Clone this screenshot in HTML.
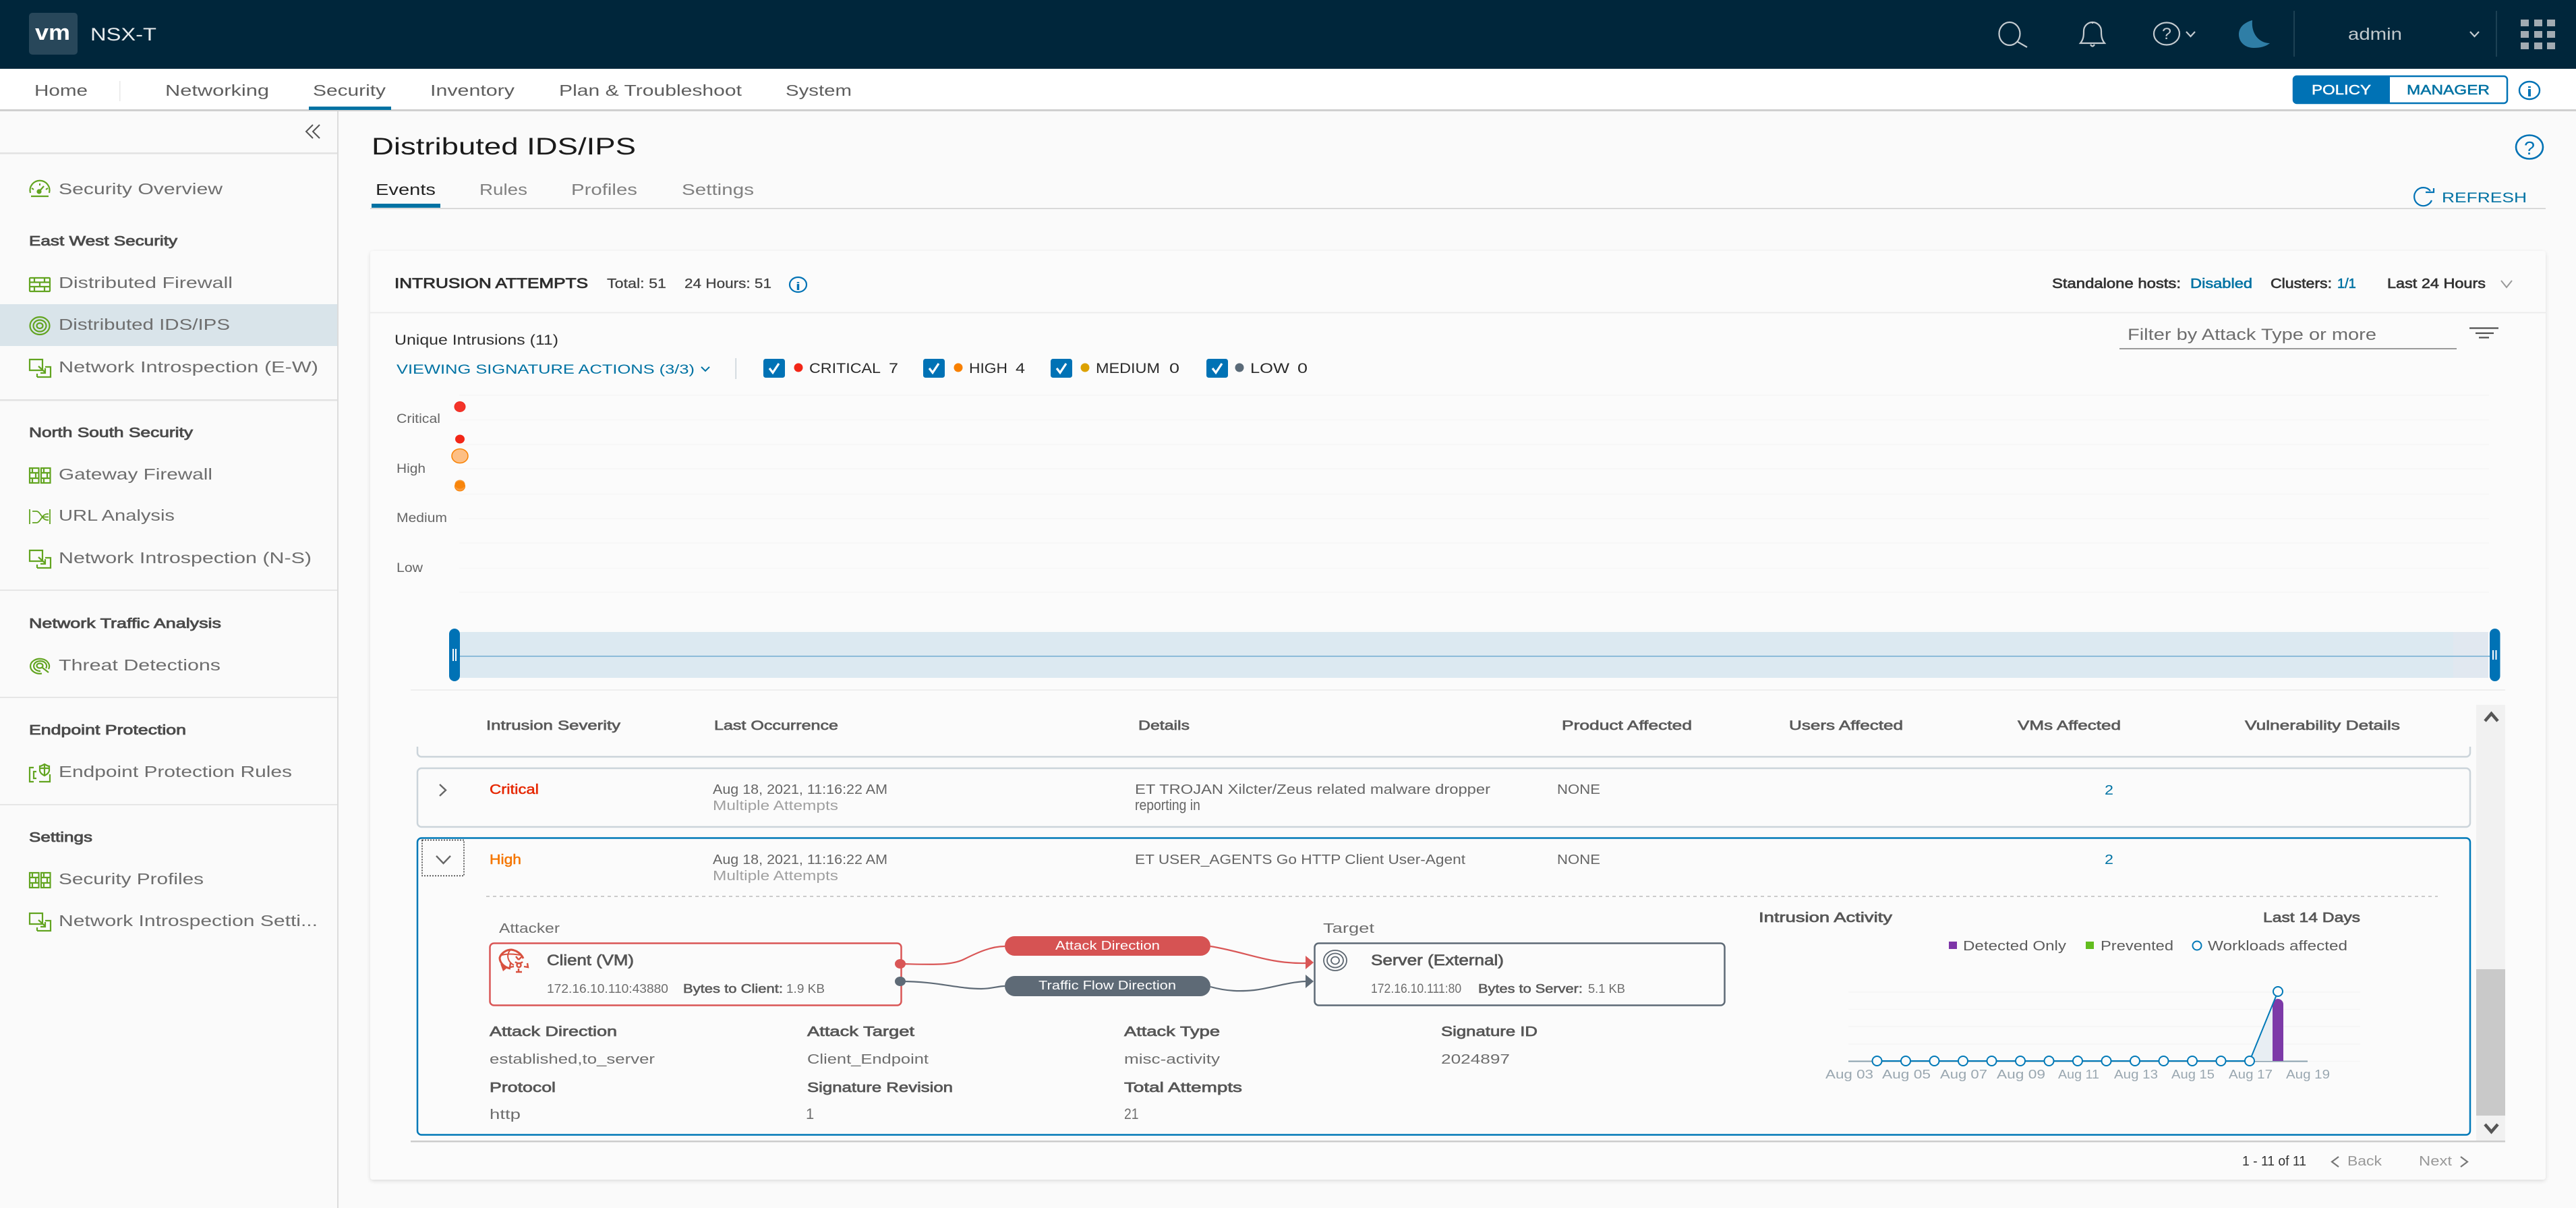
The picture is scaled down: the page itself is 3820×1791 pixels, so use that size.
<!DOCTYPE html>
<html lang="en"><head><meta charset="utf-8"><title>Distributed IDS/IPS</title>
<style>
html,body{margin:0;padding:0;background:#fafafa;width:3820px;height:1791px;overflow:hidden}
svg{display:block;font-family:"Liberation Sans",sans-serif}
.nav{font-size:23px;fill:#5e5e5e}
.side{font-size:23px;fill:#6e6e6e}
.sh{font-size:20.5px;fill:#4a4a4a;stroke:#4a4a4a;stroke-width:.8}
.tab{font-size:23px;fill:#808080}
.b{font-size:20px;fill:#333;stroke:#333;stroke-width:.65}
.bl{font-size:20px;fill:#0072a3;stroke:#0072a3;stroke-width:.6}
.m{font-size:20px;fill:#444;stroke:#444;stroke-width:.3}
.th{font-size:19px;fill:#5a5a5a;stroke:#5a5a5a;stroke-width:.65}
.td{font-size:20px;fill:#666}
.sub{font-size:20px;fill:#a0a0a0}
.dh{font-size:20px;fill:#565656;stroke:#565656;stroke-width:.7}
.dv{font-size:20px;fill:#6e6e6e}
.sm{font-size:18px;fill:#6e6e6e}
.smb{font-size:18px;fill:#5a5a5a;stroke:#5a5a5a;stroke-width:.55}
.ax{font-size:18px;fill:#9aa7b0}
.yl{font-size:19px;fill:#666}
.lg{font-size:20px;fill:#5c5c5c}
.k{font-size:21px;fill:#2a2a2a}
.ic{fill:none;stroke:#62a420;stroke-width:2.2}
</style></head><body>
<svg xmlns="http://www.w3.org/2000/svg" width="3820" height="1791" viewBox="0 0 3820 1791">
<defs>
<filter id="sd" x="-2%" y="-2%" width="104%" height="104%"><feDropShadow dx="0" dy="2" stdDeviation="3" flood-color="#000" flood-opacity=".12"/></filter>
<symbol id="fw2" overflow="visible"><g class="ic"><rect x="1" y="1" width="13.5" height="22"/><rect x="18" y="1" width="13.5" height="22"/><path d="M1 8H14.5M1 16H14.5M18 8H31.5M18 16H31.5M5 1V8M10 8V16M5 16V23M22 1V8M27 8V16M22 16V23"/></g></symbol>
<symbol id="in" overflow="visible"><g class="ic"><path d="M1 1H20V17H1Z"/><path d="M12 27H32V12H24M12 27V22"/><path d="M14 11L24 20M24 14V21H17"/></g></symbol>
<symbol id="chk" overflow="visible"><rect width="32" height="28" rx="3.5" fill="#0072b5"/><path d="M9 14L14 20.5L23 7" fill="none" stroke="#fff" stroke-width="3.2"/></symbol>
</defs>

<!-- header -->
<rect width="3820" height="102" fill="#00263b"/>
<rect x="43" y="19" width="72" height="62" rx="5" fill="#28475a"/>
<text x="52" y="59" font-size="32" font-weight="bold" fill="#fff" textLength="52" lengthAdjust="spacingAndGlyphs">vm</text>
<text x="134" y="60" font-size="27" fill="#e8ecee" textLength="98" lengthAdjust="spacingAndGlyphs">NSX-T</text>
<g fill="none" stroke="#c4cbd0" stroke-width="2.2">
<ellipse cx="2980" cy="50" rx="15.5" ry="17"/><path d="M2992 62L3006 70"/>
<path d="M3085 64C3090 58 3090 52 3090 46A13 13 0 0 1 3116 46C3116 52 3116 58 3121 64Z"/><path d="M3103 32V35"/><path d="M3100 66Q3103 71 3106 66"/>
<ellipse cx="3213" cy="50" rx="19" ry="16.5"/>
<path d="M3242 47L3248.5 54L3255 47M3663 47L3669.5 54L3676 47"/>
</g>
<text x="3206" y="58" font-size="24" fill="#c4cbd0" textLength="14" lengthAdjust="spacingAndGlyphs">?</text>
<path d="M3340 30C3326 34 3320 42 3320 51C3320 63 3330 71 3342 71C3352 71 3360 69 3366 64C3350 64 3338 50 3340 30Z" fill="#2f7ea6"/>
<path d="M3402 16V84M3702 16V84" stroke="#1d4154" stroke-width="2"/>
<text x="3482" y="59" font-size="25" fill="#c0c8cc" textLength="80" lengthAdjust="spacingAndGlyphs">admin</text>
<g fill="#a2abb2"><rect x="3738" y="29" width="12" height="10"/><rect x="3758" y="29" width="12" height="10"/><rect x="3777" y="29" width="12" height="10"/><rect x="3738" y="46" width="12" height="10"/><rect x="3758" y="46" width="12" height="10"/><rect x="3777" y="46" width="12" height="10"/><rect x="3738" y="63" width="12" height="10"/><rect x="3758" y="63" width="12" height="10"/><rect x="3777" y="63" width="12" height="10"/></g>

<!-- nav -->
<rect y="102" width="3820" height="61" fill="#fff"/>
<rect y="162" width="3820" height="3" fill="#d0d0d0"/>
<text class="nav" x="51" y="142" textLength="79" lengthAdjust="spacingAndGlyphs">Home</text>
<rect x="177" y="120" width="1.5" height="30" fill="#e8e8e8"/>
<text class="nav" x="245" y="142" textLength="154" lengthAdjust="spacingAndGlyphs">Networking</text>
<text class="nav" x="464" y="142" textLength="108" lengthAdjust="spacingAndGlyphs">Security</text>
<rect x="458" y="158" width="122" height="5" fill="#0072a3"/>
<text class="nav" x="638" y="142" textLength="125" lengthAdjust="spacingAndGlyphs">Inventory</text>
<text class="nav" x="829" y="142" textLength="271" lengthAdjust="spacingAndGlyphs">Plan &amp; Troubleshoot</text>
<text class="nav" x="1165" y="142" textLength="98" lengthAdjust="spacingAndGlyphs">System</text>
<rect x="3401" y="113" width="317" height="40" rx="5" fill="#fff" stroke="#0072b5" stroke-width="2.5"/>
<path d="M3406 112H3544V153H3406A6 6 0 0 1 3400 147V118A6 6 0 0 1 3406 112Z" fill="#0072b5"/>
<text x="3428" y="140" font-size="20" fill="#fff" stroke="#fff" stroke-width=".5" textLength="88" lengthAdjust="spacingAndGlyphs">POLICY</text>
<text x="3569" y="140" font-size="20" fill="#0072a3" stroke="#0072a3" stroke-width=".5" textLength="123" lengthAdjust="spacingAndGlyphs">MANAGER</text>
<ellipse cx="3751" cy="134" rx="15" ry="13" fill="none" stroke="#0072b5" stroke-width="2.4"/>
<text x="3747" y="143" font-size="20" font-weight="bold" fill="#0072b5" textLength="8" lengthAdjust="spacingAndGlyphs">i</text>

<!-- sidebar -->
<rect x="500" y="165" width="2" height="1626" fill="#dcdcdc"/>
<path d="M464 185L454 195L464 205M474 185L464 195L474 205" fill="none" stroke="#555" stroke-width="2"/>
<rect y="226" width="500" height="2.5" fill="#e2e2e2"/>
<rect y="592" width="500" height="2.5" fill="#e2e2e2"/>
<rect y="874" width="500" height="2" fill="#e6e6e6"/>
<rect y="1033" width="500" height="2" fill="#e6e6e6"/>
<rect y="1192" width="500" height="2" fill="#e6e6e6"/>
<rect y="451" width="500" height="62" fill="#d9e4ea"/>
<text class="side" x="87" y="288" textLength="243" lengthAdjust="spacingAndGlyphs">Security Overview</text>
<text class="sh" x="43" y="364" textLength="220" lengthAdjust="spacingAndGlyphs">East West Security</text>
<text class="side" x="87" y="427" textLength="258" lengthAdjust="spacingAndGlyphs">Distributed Firewall</text>
<text class="side" x="87" y="489" textLength="254" lengthAdjust="spacingAndGlyphs">Distributed IDS/IPS</text>
<text class="side" x="87" y="552" textLength="385" lengthAdjust="spacingAndGlyphs">Network Introspection (E-W)</text>
<text class="sh" x="43" y="648" textLength="243" lengthAdjust="spacingAndGlyphs">North South Security</text>
<text class="side" x="87" y="711" textLength="228" lengthAdjust="spacingAndGlyphs">Gateway Firewall</text>
<text class="side" x="87" y="772" textLength="172" lengthAdjust="spacingAndGlyphs">URL Analysis</text>
<text class="side" x="87" y="835" textLength="375" lengthAdjust="spacingAndGlyphs">Network Introspection (N-S)</text>
<text class="sh" x="43" y="931" textLength="285" lengthAdjust="spacingAndGlyphs">Network Traffic Analysis</text>
<text class="side" x="87" y="994" textLength="240" lengthAdjust="spacingAndGlyphs">Threat Detections</text>
<text class="sh" x="43" y="1089" textLength="233" lengthAdjust="spacingAndGlyphs">Endpoint Protection</text>
<text class="side" x="87" y="1152" textLength="346" lengthAdjust="spacingAndGlyphs">Endpoint Protection Rules</text>
<text class="sh" x="43" y="1248" textLength="94" lengthAdjust="spacingAndGlyphs">Settings</text>
<text class="side" x="87" y="1311" textLength="215" lengthAdjust="spacingAndGlyphs">Security Profiles</text>
<text class="side" x="87" y="1373" textLength="384" lengthAdjust="spacingAndGlyphs">Network Introspection Setti...</text>
<!-- sidebar icons -->
<g class="ic">
<path d="M46 291H72M45 286A14.5 14.5 0 1 1 73 286"/><path d="M59 272V275M47 279L50 281M71 279L68 281" stroke-width="2"/><circle cx="58" cy="284" r="2.5" fill="#62a420"/><path d="M58 284L65 276"/>
<rect x="44" y="412" width="30" height="20" rx="1"/><path d="M44 418.5H74M44 425H74M51 412V418.5M66 412V418.5M59 418.5V425M51 425V432M66 425V432"/>
<ellipse cx="59" cy="483" rx="14.5" ry="13"/><ellipse cx="59" cy="483" rx="9.5" ry="8.5"/><ellipse cx="59" cy="483" rx="4.5" ry="4"/>
</g>
<use href="#in" x="43" y="532"/><use href="#fw2" x="43" y="693"/><use href="#in" x="43" y="815"/><use href="#fw2" x="43" y="1293"/><use href="#in" x="43" y="1353"/>
<g class="ic">
<path d="M44 755V777M74 755V777M48 758H54C60 758 62 771 70 771H72M48 775H54C60 775 62 762 70 762H72M62 766.5H72" stroke-width="1.8"/>
<path d="M72 992A14 11 0 1 0 62 998.5"/><path d="M68 991A9.5 7.5 0 1 0 60 995"/><ellipse cx="59" cy="987" rx="4.5" ry="3.5"/><path d="M63 990L72 997"/>
<path d="M50 1138H44V1159H50M54 1144H50V1154H54M58 1159H74V1148M59 1139H73M66 1133C61 1136 59 1136 59 1136V1142C59 1146 64 1149 66 1150C68 1149 73 1146 73 1142V1136C73 1136 71 1136 66 1133ZM66 1133V1150"/>
</g>

<!-- page title and tabs -->
<text x="551" y="229" font-size="35" fill="#1a1a1a" textLength="392" lengthAdjust="spacingAndGlyphs">Distributed IDS/IPS</text>
<ellipse cx="3751" cy="218" rx="20" ry="17.5" fill="none" stroke="#0072b5" stroke-width="2.6"/>
<text x="3743" y="229" font-size="28" fill="#0072b5" textLength="16" lengthAdjust="spacingAndGlyphs">?</text>
<text class="tab" x="557" y="289" style="fill:#222" textLength="89" lengthAdjust="spacingAndGlyphs">Events</text>
<text class="tab" x="711" y="289" textLength="71" lengthAdjust="spacingAndGlyphs">Rules</text>
<text class="tab" x="847" y="289" textLength="98" lengthAdjust="spacingAndGlyphs">Profiles</text>
<text class="tab" x="1011" y="289" textLength="107" lengthAdjust="spacingAndGlyphs">Settings</text>
<rect x="549" y="308.5" width="3226" height="1.5" fill="#cfcfcf"/>
<rect x="551" y="302" width="102" height="6" fill="#0072a3"/>
<path d="M3604 283A13.5 13.5 0 1 0 3606 297" fill="none" stroke="#0072b5" stroke-width="2.2"/>
<path d="M3597 285H3609V279" fill="none" stroke="#0072b5" stroke-width="2.2"/>
<text x="3621" y="300" font-size="21" fill="#0072a3" textLength="126" lengthAdjust="spacingAndGlyphs">REFRESH</text>

<!-- card -->
<rect x="549" y="372" width="3226" height="1377" rx="4" fill="#fbfbfb" filter="url(#sd)"/>
<rect x="549" y="462.5" width="3226" height="2" fill="#ececec"/>
<text x="585" y="427" font-size="21" fill="#2e2e2e" stroke="#2e2e2e" stroke-width=".8" textLength="287" lengthAdjust="spacingAndGlyphs">INTRUSION ATTEMPTS</text>
<text class="m" x="900" y="427" textLength="88" lengthAdjust="spacingAndGlyphs">Total: 51</text>
<text class="m" x="1015" y="427" textLength="129" lengthAdjust="spacingAndGlyphs">24 Hours: 51</text>
<ellipse cx="1183.5" cy="422" rx="12.5" ry="11" fill="none" stroke="#0072b5" stroke-width="2.2"/>
<text x="1180" y="430" font-size="17" font-weight="bold" fill="#0072b5" textLength="7" lengthAdjust="spacingAndGlyphs">i</text>
<text class="b" x="3043" y="427" textLength="191" lengthAdjust="spacingAndGlyphs">Standalone hosts:</text>
<text class="bl" x="3248" y="427" textLength="92" lengthAdjust="spacingAndGlyphs">Disabled</text>
<text class="b" x="3367" y="427" textLength="91" lengthAdjust="spacingAndGlyphs">Clusters:</text>
<text class="bl" x="3466" y="427">1/1</text>
<text class="b" x="3540" y="427" textLength="146" lengthAdjust="spacingAndGlyphs">Last 24 Hours</text>
<path d="M3709 416L3717 426L3725 416" fill="none" stroke="#999" stroke-width="2"/>

<text x="585" y="511" font-size="21" fill="#2e2e2e" textLength="243" lengthAdjust="spacingAndGlyphs">Unique Intrusions (11)</text>
<text x="3155" y="504" font-size="24" fill="#6e6e6e" textLength="369" lengthAdjust="spacingAndGlyphs">Filter by Attack Type or more</text>
<rect x="3143" y="516" width="500" height="2" fill="#9a9a9a"/>
<path d="M3662 486.5H3705M3671 494H3698M3676 500.5H3691" stroke="#4f4f4f" stroke-width="2.2"/>

<text x="588" y="554" font-size="19.5" fill="#0072a3" textLength="442" lengthAdjust="spacingAndGlyphs">VIEWING SIGNATURE ACTIONS (3/3)</text>
<path d="M1040 544L1046 550L1052 544" fill="none" stroke="#0072a3" stroke-width="2"/>
<rect x="1090.5" y="531" width="1.5" height="31" fill="#c8d2d8"/>
<use href="#chk" x="1132" y="532"/><circle cx="1184" cy="545" r="6.5" fill="#f22617"/>
<text class="k" x="1200" y="553" textLength="106" lengthAdjust="spacingAndGlyphs">CRITICAL</text><text class="k" x="1318" y="553" textLength="14" lengthAdjust="spacingAndGlyphs">7</text>
<use href="#chk" x="1369" y="532"/><circle cx="1421" cy="545" r="6.5" fill="#f88000"/>
<text class="k" x="1437" y="553" textLength="57" lengthAdjust="spacingAndGlyphs">HIGH</text><text class="k" x="1506" y="553" textLength="14" lengthAdjust="spacingAndGlyphs">4</text>
<use href="#chk" x="1558" y="532"/><circle cx="1609" cy="545" r="6.5" fill="#dca100"/>
<text class="k" x="1625" y="553" textLength="95" lengthAdjust="spacingAndGlyphs">MEDIUM</text><text class="k" x="1734" y="553" textLength="15" lengthAdjust="spacingAndGlyphs">0</text>
<use href="#chk" x="1789" y="532"/><circle cx="1838" cy="545" r="6.5" fill="#5a6a78"/>
<text class="k" x="1854" y="553" textLength="58" lengthAdjust="spacingAndGlyphs">LOW</text><text class="k" x="1924" y="553" textLength="15" lengthAdjust="spacingAndGlyphs">0</text>

<!-- scatter chart -->
<g stroke="#f6f6f6" stroke-width="1.5"><path d="M681 586H3691M681 622.5H3691M681 659H3691M681 695H3691M681 732.5H3691M681 769H3691M681 805H3691M681 842.5H3691M681 878H3691"/></g>
<text class="yl" x="588" y="627" textLength="65" lengthAdjust="spacingAndGlyphs">Critical</text>
<text class="yl" x="588" y="701" textLength="43" lengthAdjust="spacingAndGlyphs">High</text>
<text class="yl" x="588" y="774" textLength="75" lengthAdjust="spacingAndGlyphs">Medium</text>
<text class="yl" x="588" y="848" textLength="39" lengthAdjust="spacingAndGlyphs">Low</text>
<ellipse cx="682" cy="603" rx="8" ry="7.5" fill="#f4342a" stroke="#ee2a20"/>
<ellipse cx="682" cy="651" rx="7" ry="6.5" fill="#f22617"/>
<ellipse cx="682" cy="676" rx="12" ry="10.5" fill="#fdbf84" stroke="#f88000" stroke-width="1.5"/>
<ellipse cx="682" cy="721" rx="7.5" ry="7" fill="#fb9a3a" stroke="#f88000"/>
<ellipse cx="682" cy="718" rx="7.5" ry="6.5" fill="#f88000" fill-opacity=".8"/>

<!-- range selector -->
<rect x="682" y="937" width="3008" height="68" fill="#dce9f1"/>
<rect x="3638" y="937" width="52" height="68" fill="#e1e8f0"/>
<rect x="682" y="972" width="3010" height="2" fill="#8dbcd9"/>
<rect x="666" y="932" width="16" height="78" rx="8" fill="#0072b5"/>
<rect x="3692" y="932" width="15.5" height="78" rx="7.7" fill="#0072b5"/>
<path d="M672 962V980M676 962V980M3697 964V978M3701.5 964V978" stroke="#fff" stroke-width="2"/>
<rect x="609" y="1022" width="3106" height="2" fill="#eee"/>

<!-- table head -->
<text class="th" x="721" y="1082" textLength="199" lengthAdjust="spacingAndGlyphs">Intrusion Severity</text>
<text class="th" x="1059" y="1082" textLength="184" lengthAdjust="spacingAndGlyphs">Last Occurrence</text>
<text class="th" x="1688" y="1082" textLength="76" lengthAdjust="spacingAndGlyphs">Details</text>
<text class="th" x="2316" y="1082" textLength="193" lengthAdjust="spacingAndGlyphs">Product Affected</text>
<text class="th" x="2653" y="1082" textLength="169" lengthAdjust="spacingAndGlyphs">Users Affected</text>
<text class="th" x="2992" y="1082" textLength="153" lengthAdjust="spacingAndGlyphs">VMs Affected</text>
<text class="th" x="3329" y="1082" textLength="230" lengthAdjust="spacingAndGlyphs">Vulnerability Details</text>

<!-- scrollbar -->
<rect x="3672" y="1045" width="43" height="647" fill="#f1f1f1"/>
<rect x="3672" y="1437" width="43" height="217" fill="#c9c9c9"/>
<path d="M3685 1069L3694.5 1058L3704 1069M3685 1667L3694.5 1678L3704 1667" fill="none" stroke="#555" stroke-width="4.5"/>

<!-- rows -->
<path d="M619 1107V1116A6 6 0 0 0 625 1122H3657A6 6 0 0 0 3663 1116V1107" fill="none" stroke="#cbd4da" stroke-width="2.5"/>
<rect x="619" y="1139" width="3044" height="87" rx="6" fill="#fbfbfb" stroke="#cbd4da" stroke-width="2.5"/>
<path d="M652 1163L661 1171.5L652 1180" fill="none" stroke="#666" stroke-width="2.4"/>
<text x="726" y="1177" font-size="20" fill="#e62700" stroke="#e62700" stroke-width=".5" textLength="73" lengthAdjust="spacingAndGlyphs">Critical</text>
<text class="td" x="1057" y="1177" textLength="259" lengthAdjust="spacingAndGlyphs">Aug 18, 2021, 11:16:22 AM</text>
<text class="sub" x="1057" y="1201" textLength="186" lengthAdjust="spacingAndGlyphs">Multiple Attempts</text>
<text class="td" x="1683" y="1177" textLength="527" lengthAdjust="spacingAndGlyphs">ET TROJAN Xilcter/Zeus related malware dropper</text>
<text class="td" transform="translate(1683 1201) scale(.88 1)" style="font-size:22px">reporting in</text>
<text class="td" x="2309" y="1177" textLength="64" lengthAdjust="spacingAndGlyphs">NONE</text>
<text x="3121" y="1178" font-size="20" fill="#0072a3" textLength="13" lengthAdjust="spacingAndGlyphs">2</text>

<rect x="619" y="1242.5" width="3044" height="440" rx="6" fill="#fbfbfb" stroke="#0079b8" stroke-width="2.5"/>
<rect x="626" y="1245.5" width="62" height="53" fill="none" stroke="#333" stroke-width="1.5" stroke-dasharray="2 2"/>
<path d="M647 1269L657.5 1280L668 1269" fill="none" stroke="#666" stroke-width="2.4"/>
<text x="726" y="1281" font-size="20" fill="#f57600" stroke="#f57600" stroke-width=".5" textLength="47" lengthAdjust="spacingAndGlyphs">High</text>
<text class="td" x="1057" y="1281" textLength="259" lengthAdjust="spacingAndGlyphs">Aug 18, 2021, 11:16:22 AM</text>
<text class="sub" x="1057" y="1305" textLength="186" lengthAdjust="spacingAndGlyphs">Multiple Attempts</text>
<text class="td" x="1683" y="1281" textLength="490" lengthAdjust="spacingAndGlyphs">ET USER_AGENTS Go HTTP Client User-Agent</text>
<text class="td" x="2309" y="1281" textLength="64" lengthAdjust="spacingAndGlyphs">NONE</text>
<text x="3121" y="1281" font-size="20" fill="#0072a3" textLength="13" lengthAdjust="spacingAndGlyphs">2</text>
<path d="M721 1329H3615" stroke="#ccc" stroke-width="2" stroke-dasharray="5 5"/>

<!-- flow -->
<text class="dv" x="740" y="1383" textLength="90" lengthAdjust="spacingAndGlyphs">Attacker</text>
<text class="dv" x="1962" y="1383" textLength="76" lengthAdjust="spacingAndGlyphs">Target</text>
<rect x="726.5" y="1398.5" width="610" height="92" rx="6" fill="#fbfbfb" stroke="#d95656" stroke-width="2.5"/>
<rect x="1949.5" y="1398.5" width="608" height="92" rx="6" fill="#fbfbfb" stroke="#5e6a76" stroke-width="2.5"/>
<g fill="none" stroke="#d8503e" stroke-width="2.5"><path d="M757 1436C746 1434 741 1426 741 1420C743 1413 751 1408 758 1408C766 1409 773 1414 776 1421" stroke-width="3"/><path d="M744 1416Q755 1413 772 1416M757 1408C750 1416 753 1426 762 1431" stroke-width="2"/></g>
<path d="M742 1429L752 1435L746 1440Z" fill="#d8503e"/>
<g fill="none" stroke="#d8503e" stroke-width="2.4"><circle cx="769.5" cy="1431" r="3"/><path d="M769 1423L765 1418M769 1423L774 1418M762 1433L756 1434L757 1428M777 1433L783 1434L782 1428M769 1436V1441M765 1441H774M764 1426A8 8 0 0 0 775 1426"/></g>
<text x="811" y="1431" font-size="22" fill="#555" stroke="#555" stroke-width=".7" textLength="129" lengthAdjust="spacingAndGlyphs">Client (VM)</text>
<text class="sm" x="811" y="1472" textLength="180" lengthAdjust="spacingAndGlyphs">172.16.10.110:43880</text>
<text class="smb" x="1013" y="1472" textLength="148" lengthAdjust="spacingAndGlyphs">Bytes to Client:</text>
<text class="sm" x="1166" y="1472" textLength="57" lengthAdjust="spacingAndGlyphs">1.9 KB</text>
<g fill="none" stroke="#5c6670" stroke-width="1.8"><ellipse cx="1980" cy="1424" rx="17" ry="15"/><ellipse cx="1980" cy="1424" rx="12" ry="10.5"/><ellipse cx="1980" cy="1424" rx="6" ry="5.5"/></g>
<text x="2033" y="1431" font-size="22" fill="#555" stroke="#555" stroke-width=".7" textLength="197" lengthAdjust="spacingAndGlyphs">Server (External)</text>
<text class="sm" transform="translate(2033 1472) scale(.925 1)" style="font-size:19px">172.16.10.111:80</text>
<text class="smb" x="2192" y="1472" textLength="155" lengthAdjust="spacingAndGlyphs">Bytes to Server:</text>
<text class="sm" x="2355" y="1472" textLength="55" lengthAdjust="spacingAndGlyphs">5.1 KB</text>
<path d="M1335 1429C1380 1430 1410 1432 1430 1422C1450 1412 1470 1403 1490 1403M1795 1403C1850 1412 1880 1429 1936 1428" fill="none" stroke="#d95656" stroke-width="2.2"/>
<path d="M1335 1455C1390 1455 1420 1466 1455 1466C1470 1466 1480 1462 1490 1462M1795 1463C1820 1470 1840 1470 1860 1468C1885 1465 1910 1456 1936 1455" fill="none" stroke="#5e6a76" stroke-width="2.2"/>
<ellipse cx="1335" cy="1429" rx="8" ry="7" fill="#d95656"/><ellipse cx="1335" cy="1455" rx="8" ry="7" fill="#5e6a76"/>
<path d="M1936 1417L1948 1427L1936 1437Z" fill="#d95656"/><path d="M1936 1445L1948 1455L1936 1465Z" fill="#5e6a76"/>
<rect x="1490" y="1388" width="305" height="29" rx="14.5" fill="#d65353"/>
<rect x="1490" y="1447" width="305" height="30" rx="15" fill="#5e6a76"/>
<text x="1565" y="1408" font-size="18" fill="#fff" textLength="155" lengthAdjust="spacingAndGlyphs">Attack Direction</text>
<text x="1540" y="1467" font-size="18" fill="#fff" textLength="204" lengthAdjust="spacingAndGlyphs">Traffic Flow Direction</text>

<!-- detail attrs -->
<text class="dh" x="726" y="1536" textLength="189" lengthAdjust="spacingAndGlyphs">Attack Direction</text>
<text class="dv" x="726" y="1577" textLength="245" lengthAdjust="spacingAndGlyphs">established,to_server</text>
<text class="dh" x="726" y="1619" textLength="98" lengthAdjust="spacingAndGlyphs">Protocol</text>
<text class="dv" x="726" y="1659" textLength="46" lengthAdjust="spacingAndGlyphs">http</text>
<text class="dh" x="1197" y="1536" textLength="159" lengthAdjust="spacingAndGlyphs">Attack Target</text>
<text class="dv" x="1197" y="1577" textLength="180" lengthAdjust="spacingAndGlyphs">Client_Endpoint</text>
<text class="dh" x="1197" y="1619" textLength="216" lengthAdjust="spacingAndGlyphs">Signature Revision</text>
<text class="dv" x="1195" y="1659" style="font-size:22px">1</text>
<text class="dh" x="1667" y="1536" textLength="142" lengthAdjust="spacingAndGlyphs">Attack Type</text>
<text class="dv" x="1667" y="1577" textLength="142" lengthAdjust="spacingAndGlyphs">misc-activity</text>
<text class="dh" x="1667" y="1619" textLength="175" lengthAdjust="spacingAndGlyphs">Total Attempts</text>
<text class="dv" transform="translate(1667 1659) scale(.88 1)" style="font-size:22px">21</text>
<text class="dh" x="2137" y="1536" textLength="143" lengthAdjust="spacingAndGlyphs">Signature ID</text>
<text class="dv" x="2137" y="1577" textLength="102" lengthAdjust="spacingAndGlyphs">2024897</text>

<!-- activity chart -->
<text class="dh" x="2608" y="1367" textLength="198" lengthAdjust="spacingAndGlyphs">Intrusion Activity</text>
<text class="dh" x="3356" y="1367" textLength="144" lengthAdjust="spacingAndGlyphs">Last 14 Days</text>
<rect x="2890" y="1396" width="12" height="11" fill="#7d35a8"/>
<text class="lg" x="2911" y="1409" textLength="153" lengthAdjust="spacingAndGlyphs">Detected Only</text>
<rect x="3093" y="1396" width="12" height="11" fill="#62bd1e"/>
<text class="lg" x="3115" y="1409" textLength="108" lengthAdjust="spacingAndGlyphs">Prevented</text>
<circle cx="3258" cy="1402" r="6.5" fill="none" stroke="#0079b8" stroke-width="2"/>
<text class="lg" x="3274" y="1409" textLength="207" lengthAdjust="spacingAndGlyphs">Workloads affected</text>
<path d="M2741 1471H3500M2741 1496.5H3500M2741 1522H3500M2741 1548H3500M2741 1573.5H3500" stroke="#f5f5f5" stroke-width="1.5"/>
<path d="M2741 1573.5H3422" stroke="#8aa0ad" stroke-width="2"/>
<path d="M3336 1573L3378 1470V1573Z" fill="#e8eef3"/>
<path d="M3370 1573V1489A8 8 0 0 1 3386 1489V1573Z" fill="#7d3aa8"/>
<path d="M2783.5 1573H3336L3378 1470" fill="none" stroke="#0079b8" stroke-width="2"/>
<g fill="#fbfbfb" stroke="#0079b8" stroke-width="2"><circle cx="2783.5" cy="1573" r="7"/><circle cx="2826" cy="1573" r="7"/><circle cx="2868.5" cy="1573" r="7"/><circle cx="2911" cy="1573" r="7"/><circle cx="2953.5" cy="1573" r="7"/><circle cx="2996" cy="1573" r="7"/><circle cx="3038.5" cy="1573" r="7"/><circle cx="3081" cy="1573" r="7"/><circle cx="3123.5" cy="1573" r="7"/><circle cx="3166" cy="1573" r="7"/><circle cx="3208.5" cy="1573" r="7"/><circle cx="3251" cy="1573" r="7"/><circle cx="3293.5" cy="1573" r="7"/><circle cx="3336" cy="1573" r="7"/><circle cx="3378" cy="1470" r="7"/></g>
<text class="ax" x="2707" y="1599" textLength="71" lengthAdjust="spacingAndGlyphs">Aug 03</text>
<text class="ax" x="2791" y="1599" textLength="72" lengthAdjust="spacingAndGlyphs">Aug 05</text>
<text class="ax" x="2877" y="1599" textLength="70" lengthAdjust="spacingAndGlyphs">Aug 07</text>
<text class="ax" x="2961" y="1599" textLength="72" lengthAdjust="spacingAndGlyphs">Aug 09</text>
<text class="ax" x="3052" y="1599" textLength="61" lengthAdjust="spacingAndGlyphs">Aug 11</text>
<text class="ax" x="3135" y="1599" textLength="65" lengthAdjust="spacingAndGlyphs">Aug 13</text>
<text class="ax" x="3220" y="1599" textLength="64" lengthAdjust="spacingAndGlyphs">Aug 15</text>
<text class="ax" x="3305" y="1599" textLength="65" lengthAdjust="spacingAndGlyphs">Aug 17</text>
<text class="ax" x="3390" y="1599" textLength="65" lengthAdjust="spacingAndGlyphs">Aug 19</text>

<!-- footer -->
<rect x="609" y="1691" width="3106" height="2.5" fill="#ccc"/>
<text x="3325" y="1728" font-size="20" fill="#333" textLength="95" lengthAdjust="spacingAndGlyphs">1 - 11 of 11</text>
<path d="M3468 1715L3458 1722.5L3468 1730M3649 1715L3659 1722.5L3649 1730" fill="none" stroke="#777" stroke-width="2.2"/>
<text x="3481" y="1728" font-size="20" fill="#999" textLength="51" lengthAdjust="spacingAndGlyphs">Back</text>
<text x="3587" y="1728" font-size="20" fill="#999" textLength="49" lengthAdjust="spacingAndGlyphs">Next</text>
</svg>
</body></html>
